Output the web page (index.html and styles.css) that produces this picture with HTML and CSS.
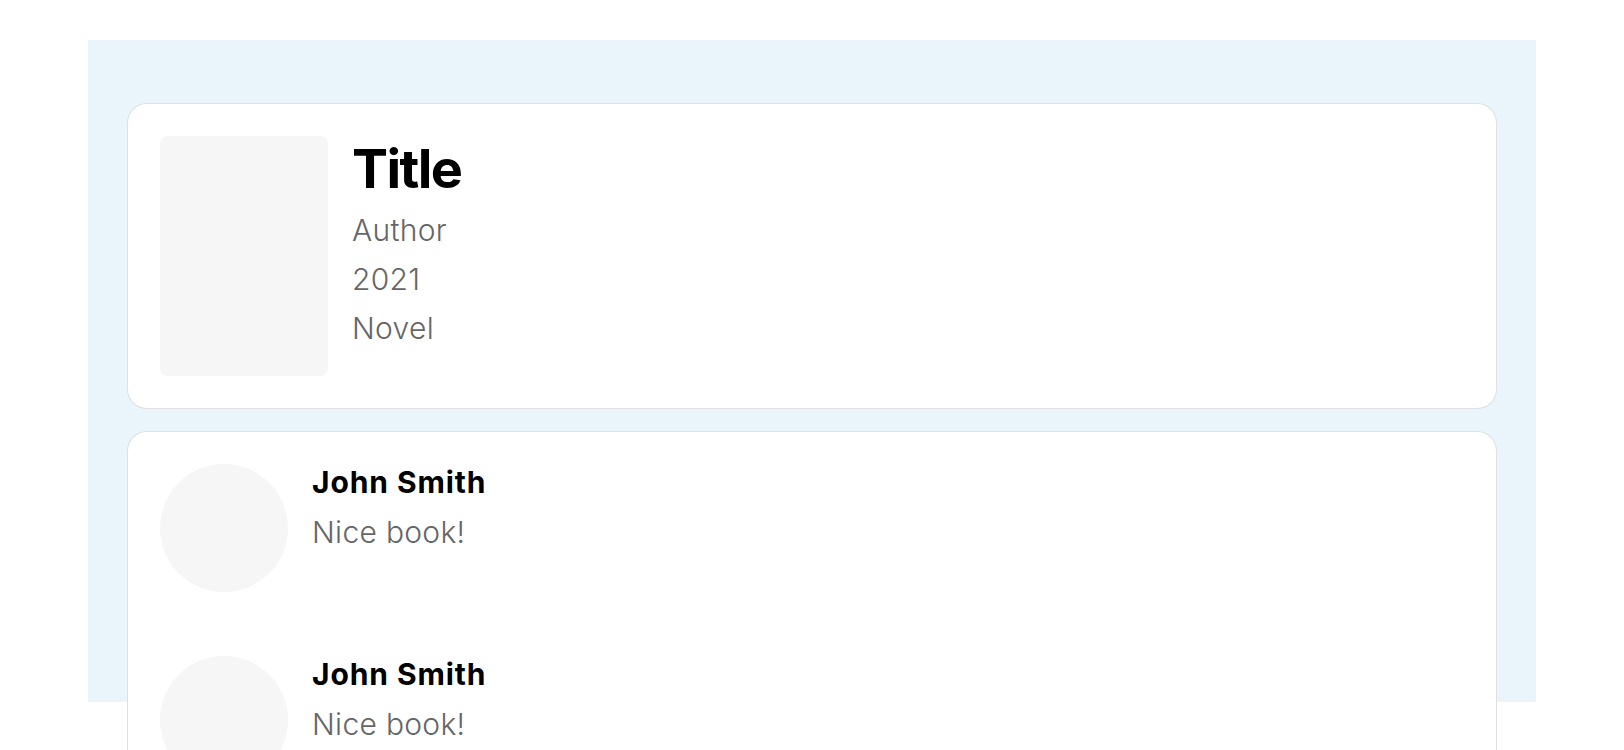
FILE: index.html
```html
<!DOCTYPE html>
<html lang="en">
<head>
<meta charset="utf-8">
<title>Book</title>
<link rel="stylesheet" href="styles.css">
</head>
<body>
<div class="page">
<main class="screen">
  <section class="card book">
    <div class="cover"></div>
    <div class="book-info">
      <h1 class="book-title">Title</h1>
      <p class="meta">Author</p>
      <p class="meta">2021</p>
      <p class="meta">Novel</p>
    </div>
  </section>
  <section class="card comments">
    <article class="comment">
      <div class="avatar"></div>
      <div class="comment-body">
        <h2 class="comment-name">John Smith</h2>
        <p class="comment-text">Nice book!</p>
      </div>
    </article>
    <article class="comment">
      <div class="avatar"></div>
      <div class="comment-body">
        <h2 class="comment-name">John Smith</h2>
        <p class="comment-text">Nice book!</p>
      </div>
    </article>
    <article class="comment">
      <div class="avatar"></div>
      <div class="comment-body">
        <h2 class="comment-name">John Smith</h2>
        <p class="comment-text">Nice book!</p>
      </div>
    </article>
  </section>
</main>
</div>
</body>
</html>
```

FILE: styles.css
```css
* { box-sizing: border-box; }

html, body {
  margin: 0;
  padding: 0;
  background: #ffffff;
  font-family: Inter, "Noto Sans", sans-serif;
}

.page {
  padding: 40px 0 400px;
}

.screen {
  width: 1448px;
  height: 662px;
  margin: 0 auto;
  padding: 63px 39px 0;
  background: #e9f5fa;
  display: flex;
  flex-direction: column;
  gap: 22px;
}

.card {
  flex: none;
  background: #ffffff;
  border: 1px solid rgba(0, 0, 0, 0.12);
  border-radius: 20px;
  padding: 32px;
}

.book {
  display: flex;
  gap: 24px;
  align-items: flex-start;
}

.cover {
  width: 168px;
  height: 240px;
  border-radius: 8px;
  background: #f6f6f6;
  flex: none;
}

.book-info {
  display: flex;
  flex-direction: column;
  gap: 13px;
}

.book-title {
  margin: 0 0 -2px;
  font-size: 54px;
  font-weight: 700;
  line-height: normal;
  letter-spacing: -0.03em;
  color: #000;
}

.meta {
  margin: 0;
  font-size: 30px;
  font-weight: 300;
  line-height: normal;
  letter-spacing: 0.01em;
  color: #666666;
}

.comments {
  display: flex;
  flex-direction: column;
  gap: 64px;
}

.comment {
  display: flex;
  gap: 24px;
  align-items: flex-start;
}

.avatar {
  width: 128px;
  height: 128px;
  border-radius: 50%;
  background: #f6f6f6;
  flex: none;
}

.comment-body {
  display: flex;
  flex-direction: column;
  gap: 14px;
}

.comment-name {
  margin: 0;
  font-size: 30px;
  font-weight: 700;
  line-height: normal;
  letter-spacing: 0.03em;
  color: #000;
}

.comment-text {
  margin: 0;
  font-size: 30px;
  font-weight: 300;
  line-height: normal;
  letter-spacing: 0.01em;
  color: #666666;
}
```
